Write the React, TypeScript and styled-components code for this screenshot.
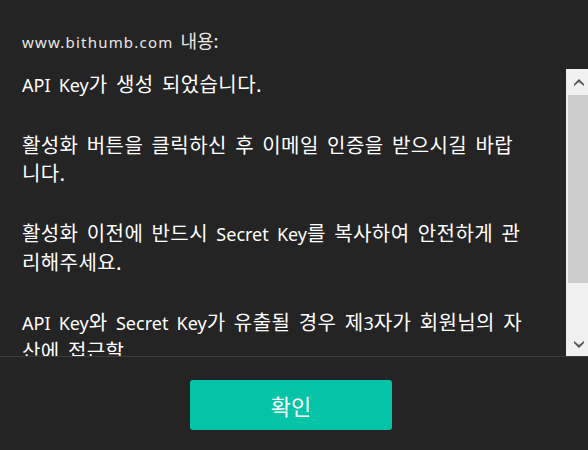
import React from 'react';
import styled, { createGlobalStyle } from 'styled-components';

const GlobalStyle = createGlobalStyle`
  html, body {
    margin: 0;
    padding: 0;
    background: #242424;
  }
  body {
    font-family: "Noto Sans CJK KR", "Noto Sans", sans-serif;
  }
`;

// 다이얼로그 전체
const Dialog = styled.div`
  width: 588px;
  height: 450px;
  display: flex;
  flex-direction: column;
  background: #242424;
  color: #ffffff;
  overflow: hidden;
`;

const Origin = styled.div`
  padding: 30px 22px 0 22px;
  height: 38px;
  font-size: 18px;
  line-height: 20px;
  word-spacing: 3px;
  color: #e8e8e8;
`;

// 한글 사이의 영문은 작게 (맑은 고딕처럼)
const Latin = styled.span<{ $size: number; $spacing?: number }>`
  font-family: "Noto Sans", sans-serif;
  font-size: ${p => p.$size}px;
  letter-spacing: ${p => p.$spacing ?? 0}px;
`;

const MessageArea = styled.div`
  display: flex;
  height: 287px;
  margin-top: 1px;
  border-bottom: 1px solid #3b3b3b;
`;

const MessageText = styled.div`
  flex: 1;
  overflow: hidden;
  padding: 1px 0 0 22px;
  font-size: 20px;
  line-height: 28px;
  letter-spacing: 0.4px;
  word-spacing: 3.5px;
  color: #ffffff;
`;

const Paragraph = styled.p`
  margin: 0 0 32px 0;
  white-space: nowrap;
`;

const Scrollbar = styled.div`
  width: 22px;
  display: flex;
  flex-direction: column;
  background: #f0f0f0;
`;

const ArrowButton = styled.div<{ $bottom?: boolean }>`
  height: 26px;
  display: flex;
  justify-content: center;
  align-items: ${p => (p.$bottom ? 'flex-end' : 'flex-start')};
  padding: ${p => (p.$bottom ? '0 0 8px 4px' : '10px 0 0 4px')};
  box-sizing: border-box;
`;

const Track = styled.div`
  flex: 1;
  padding-left: 2px;
`;

const Thumb = styled.div`
  height: 188px;
  background: #cdcdcd;
`;

const Footer = styled.div`
  flex: 1;
  display: flex;
  justify-content: center;
  padding: 23px 6px 0 0;
`;

const ConfirmButton = styled.button`
  width: 202px;
  height: 50px;
  border: none;
  border-radius: 3px;
  background: #05c3a7;
  color: #ffffff;
  font-family: "Noto Sans CJK KR", sans-serif;
  font-size: 22px;
  cursor: pointer;
`;

const Arrow = ({ down }: { down?: boolean }) => (
  <svg width="10" height="7" viewBox="0 0 10 7">
    <path
      d={down ? 'M0 0 L5 4 L10 0 L10 2 L5 7 L0 2 Z' : 'M0 7 L5 3 L10 7 L10 5 L5 0 L0 5 Z'}
      fill="#555555"
    />
  </svg>
);

function App() {
  return (
    <>
      <GlobalStyle />
      <Dialog>
        <Origin>
          <Latin $size={15} $spacing={1.2}>www.bithumb.com</Latin> 내용:
        </Origin>
        <MessageArea>
          <MessageText>
            <Paragraph>
              <Latin $size={18}>API Key</Latin>가 생성 되었습니다.
            </Paragraph>
            <Paragraph>
              활성화 버튼을 클릭하신 후 이메일 인증을 받으시길 바랍
              <br />
              니다.
            </Paragraph>
            <Paragraph>
              활성화 이전에 반드시 <Latin $size={18}>Secret Key</Latin>를 복사하여 안전하게 관
              <br />
              리해주세요.
            </Paragraph>
            <Paragraph>
              <Latin $size={18}>API Key</Latin>와 <Latin $size={18}>Secret Key</Latin>가 유출될 경우 제
              <Latin $size={18}>3</Latin>자가 회원님의 자
              <br />
              산에 접근할
            </Paragraph>
          </MessageText>
          <Scrollbar>
            <ArrowButton>
              <Arrow />
            </ArrowButton>
            <Track>
              <Thumb />
            </Track>
            <ArrowButton $bottom>
              <Arrow down />
            </ArrowButton>
          </Scrollbar>
        </MessageArea>
        <Footer>
          <ConfirmButton>확인</ConfirmButton>
        </Footer>
      </Dialog>
    </>
  );
}

export default App;
